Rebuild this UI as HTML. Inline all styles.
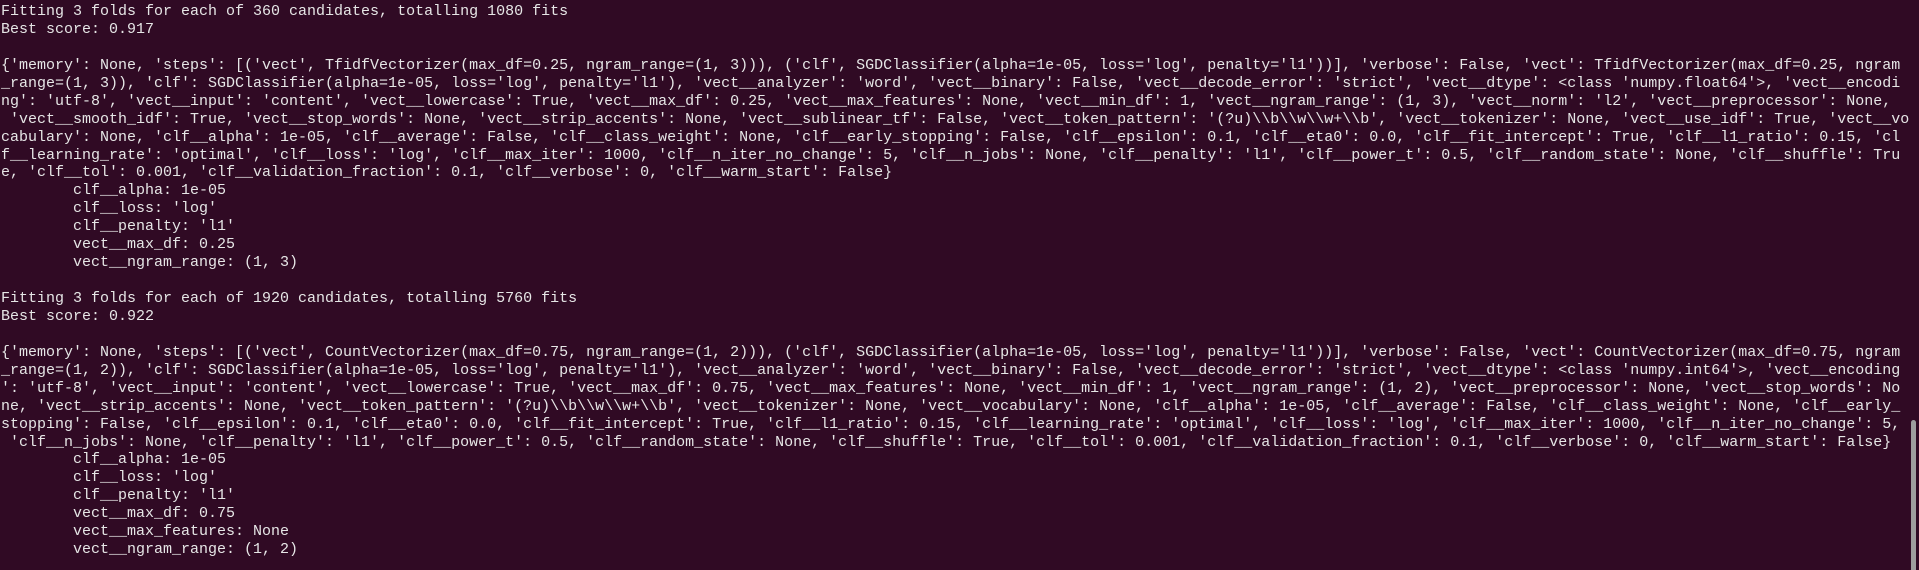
<!DOCTYPE html>
<html><head><meta charset="utf-8"><style>
html,body{margin:0;padding:0;background:#300a24;width:1919px;height:568px;overflow:hidden}
pre{margin:0;position:absolute;left:1px;top:3px;font-family:"Liberation Mono","DejaVu Sans Mono",monospace;font-size:15px;line-height:17.93px;color:#e6e6e6;white-space:pre}
.sb{position:absolute;left:1911px;top:420px;width:5px;height:150px;background:#9e9e9e;border-radius:3px 3px 0 0}
</style></head><body>
<pre>Fitting 3 folds for each of 360 candidates, totalling 1080 fits
Best score: 0.917

{'memory': None, 'steps': [('vect', TfidfVectorizer(max_df=0.25, ngram_range=(1, 3))), ('clf', SGDClassifier(alpha=1e-05, loss='log', penalty='l1'))], 'verbose': False, 'vect': TfidfVectorizer(max_df=0.25, ngram
_range=(1, 3)), 'clf': SGDClassifier(alpha=1e-05, loss='log', penalty='l1'), 'vect__analyzer': 'word', 'vect__binary': False, 'vect__decode_error': 'strict', 'vect__dtype': &lt;class 'numpy.float64'&gt;, 'vect__encodi
ng': 'utf-8', 'vect__input': 'content', 'vect__lowercase': True, 'vect__max_df': 0.25, 'vect__max_features': None, 'vect__min_df': 1, 'vect__ngram_range': (1, 3), 'vect__norm': 'l2', 'vect__preprocessor': None,
 'vect__smooth_idf': True, 'vect__stop_words': None, 'vect__strip_accents': None, 'vect__sublinear_tf': False, 'vect__token_pattern': '(?u)\\b\\w\\w+\\b', 'vect__tokenizer': None, 'vect__use_idf': True, 'vect__vo
cabulary': None, 'clf__alpha': 1e-05, 'clf__average': False, 'clf__class_weight': None, 'clf__early_stopping': False, 'clf__epsilon': 0.1, 'clf__eta0': 0.0, 'clf__fit_intercept': True, 'clf__l1_ratio': 0.15, 'cl
f__learning_rate': 'optimal', 'clf__loss': 'log', 'clf__max_iter': 1000, 'clf__n_iter_no_change': 5, 'clf__n_jobs': None, 'clf__penalty': 'l1', 'clf__power_t': 0.5, 'clf__random_state': None, 'clf__shuffle': Tru
e, 'clf__tol': 0.001, 'clf__validation_fraction': 0.1, 'clf__verbose': 0, 'clf__warm_start': False}
        clf__alpha: 1e-05
        clf__loss: 'log'
        clf__penalty: 'l1'
        vect__max_df: 0.25
        vect__ngram_range: (1, 3)

Fitting 3 folds for each of 1920 candidates, totalling 5760 fits
Best score: 0.922

{'memory': None, 'steps': [('vect', CountVectorizer(max_df=0.75, ngram_range=(1, 2))), ('clf', SGDClassifier(alpha=1e-05, loss='log', penalty='l1'))], 'verbose': False, 'vect': CountVectorizer(max_df=0.75, ngram
_range=(1, 2)), 'clf': SGDClassifier(alpha=1e-05, loss='log', penalty='l1'), 'vect__analyzer': 'word', 'vect__binary': False, 'vect__decode_error': 'strict', 'vect__dtype': &lt;class 'numpy.int64'&gt;, 'vect__encoding
': 'utf-8', 'vect__input': 'content', 'vect__lowercase': True, 'vect__max_df': 0.75, 'vect__max_features': None, 'vect__min_df': 1, 'vect__ngram_range': (1, 2), 'vect__preprocessor': None, 'vect__stop_words': No
ne, 'vect__strip_accents': None, 'vect__token_pattern': '(?u)\\b\\w\\w+\\b', 'vect__tokenizer': None, 'vect__vocabulary': None, 'clf__alpha': 1e-05, 'clf__average': False, 'clf__class_weight': None, 'clf__early_
stopping': False, 'clf__epsilon': 0.1, 'clf__eta0': 0.0, 'clf__fit_intercept': True, 'clf__l1_ratio': 0.15, 'clf__learning_rate': 'optimal', 'clf__loss': 'log', 'clf__max_iter': 1000, 'clf__n_iter_no_change': 5,
 'clf__n_jobs': None, 'clf__penalty': 'l1', 'clf__power_t': 0.5, 'clf__random_state': None, 'clf__shuffle': True, 'clf__tol': 0.001, 'clf__validation_fraction': 0.1, 'clf__verbose': 0, 'clf__warm_start': False}
        clf__alpha: 1e-05
        clf__loss: 'log'
        clf__penalty: 'l1'
        vect__max_df: 0.75
        vect__max_features: None
        vect__ngram_range: (1, 2)</pre>
<div class="sb"></div>
</body></html>
